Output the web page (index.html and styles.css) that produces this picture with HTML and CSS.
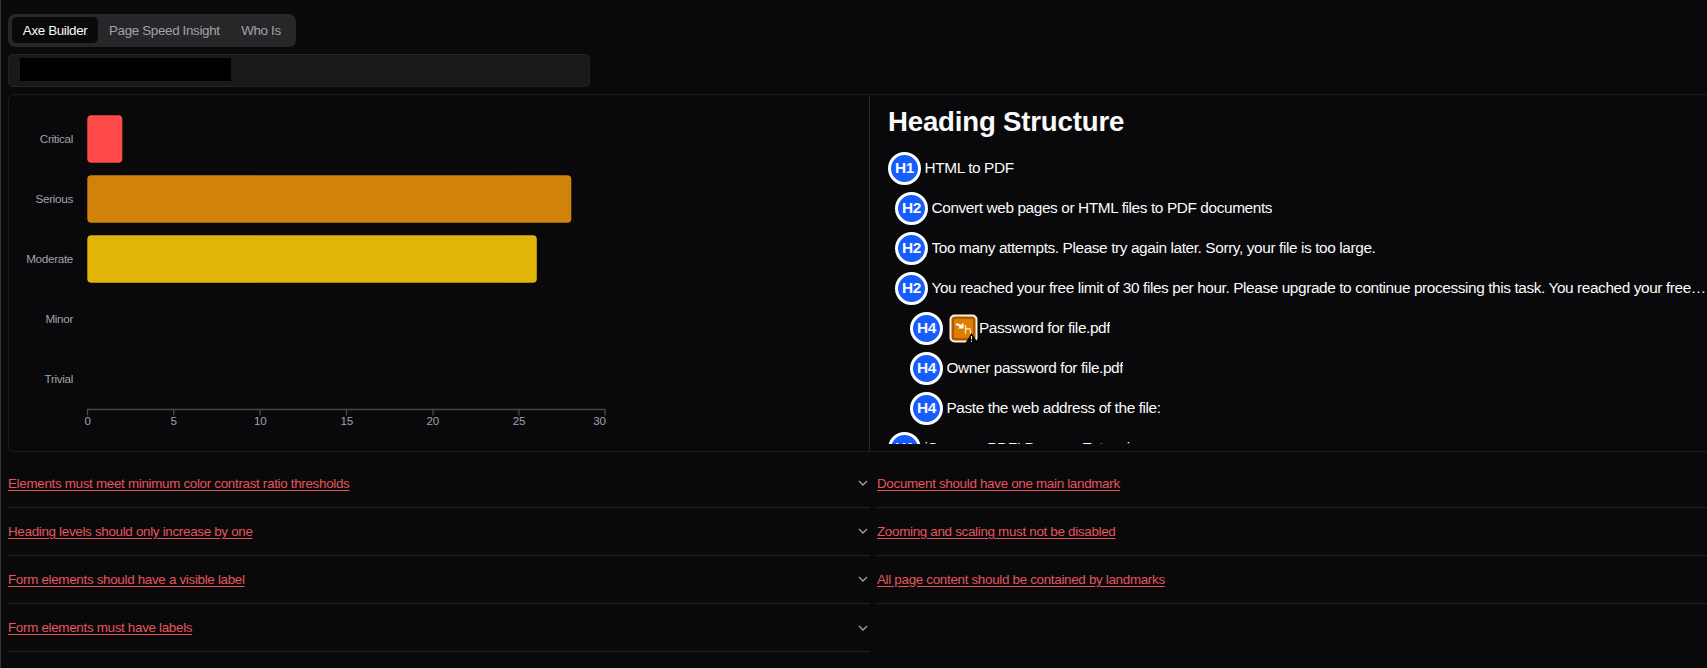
FILE: index.html
```html
<!DOCTYPE html>
<html lang="en">
<head>
<meta charset="utf-8">
<title>Axe Builder</title>
<link rel="stylesheet" href="styles.css">
</head>
<body>
<main class="app">
  <nav class="tabs">
    <button class="tab tab-active">Axe Builder</button>
    <button class="tab">Page Speed Insight</button>
    <button class="tab">Who Is</button>
  </nav>
  <div class="url-field"><span class="redacted"></span></div>
  <section class="panels">
    <div class="chart">
      <svg class="chart-svg" width="640" height="356" viewBox="0 0 640 356">
        <rect x="78.300" y="20.300" width="35" height="47.5" rx="4" fill="#ff4a49"/>
        <rect x="78.300" y="80.300" width="484" height="47.5" rx="4" fill="#d1820b"/>
        <rect x="78.300" y="140.300" width="449.500" height="47.5" rx="4" fill="#e0b508"/>
        <g class="label-y">
          <text x="64" y="48">Critical</text>
          <text x="64" y="108">Serious</text>
          <text x="64" y="168">Moderate</text>
          <text x="64" y="228">Minor</text>
          <text x="64" y="288">Trivial</text>
        </g>
        <path class="axis" d="M78 314.500H596.500M78.500 314.500v6M164.700 314.500v6M251 314.500v6M337.500 314.500v6M424 314.500v6M510 314.500v6M596 314.500v6"/>
        <g class="label-x">
          <text x="78.500" y="330">0</text>
          <text x="164.700" y="330">5</text>
          <text x="251.200" y="330">10</text>
          <text x="337.700" y="330">15</text>
          <text x="423.800" y="330">20</text>
          <text x="510" y="330">25</text>
          <text x="590.500" y="330">30</text>
        </g>
      </svg>
    </div>
    <div class="structure">
      <h1 class="structure-title">Heading Structure</h1>
      <ul class="tree">
        <li class="node"><span class="badge">H1</span><span class="node-text">HTML to PDF</span></li>
        <li class="node level-2"><span class="badge">H2</span><span class="node-text">Convert web pages or HTML files to PDF documents</span></li>
        <li class="node level-2"><span class="badge">H2</span><span class="node-text">Too many attempts. Please try again later. Sorry, your file is too large.</span></li>
        <li class="node level-2"><span class="badge">H2</span><span class="node-text node-text-long">You reached your free limit of 30 files per hour. Please upgrade to continue processing this task. You reached your free…</span></li>
        <li class="node level-4"><span class="badge">H4</span>
          <svg class="skip-icon" width="29" height="29" viewBox="0 0 29 29">
            <rect x="0.500" y="0.500" width="28" height="28" rx="5" fill="#fff0db"/>
            <rect x="2.500" y="2.500" width="24" height="24" rx="3.500" fill="#a95b05"/>
            <rect x="5" y="5" width="19" height="19" rx="1" fill="#e07d00"/>
            <path d="M7 10l5 2" stroke="#fff" stroke-width="2"/><path d="M14.500 8.500v6h-5.500z" fill="#fff"/>
            <path d="M16.500 11v9M16.500 16.500q0-2 2.500-2t2.500 2v3.500" fill="none" stroke="#ffe2b6" stroke-width="1.300"/>
            <path d="M16.500 29l6-10 6.500 10z" fill="#000"/><path d="M22.500 22v3.500M22.500 26.800v1.200" stroke="#fff" stroke-width="1.200"/>
          </svg><span class="node-text">Password for file.pdf</span></li>
        <li class="node level-4"><span class="badge">H4</span><span class="node-text">Owner password for file.pdf</span></li>
        <li class="node level-4"><span class="badge">H4</span><span class="node-text">Paste the web address of the file:</span></li>
        <li class="node"><span class="badge">H1</span><span class="node-text">iSummer PDF! Browser Extension</span></li>
      </ul>
    </div>
  </section>
  <section class="issues">
    <div class="issue-col">
      <div class="issue"><a class="issue-link">Elements must meet minimum color contrast ratio thresholds</a><svg class="chevron" viewBox="0 0 10 6"><path d="M1 1l4 4 4-4"/></svg></div>
      <div class="issue"><a class="issue-link">Heading levels should only increase by one</a><svg class="chevron" viewBox="0 0 10 6"><path d="M1 1l4 4 4-4"/></svg></div>
      <div class="issue"><a class="issue-link">Form elements should have a visible label</a><svg class="chevron" viewBox="0 0 10 6"><path d="M1 1l4 4 4-4"/></svg></div>
      <div class="issue"><a class="issue-link">Form elements must have labels</a><svg class="chevron" viewBox="0 0 10 6"><path d="M1 1l4 4 4-4"/></svg></div>
    </div>
    <div class="issue-col">
      <div class="issue"><a class="issue-link">Document should have one main landmark</a></div>
      <div class="issue"><a class="issue-link">Zooming and scaling must not be disabled</a></div>
      <div class="issue"><a class="issue-link">All page content should be contained by landmarks</a></div>
    </div>
  </section>
</main>
</body>
</html>
```
FILE: styles.css
```css
* { box-sizing: border-box; }
body {
  margin: 0;
  background: #09090b;
  color: #fafafa;
  font-family: "Liberation Sans", Arial, sans-serif;
  overflow: hidden;
}
.app {
  height: 668px;
  padding: 13.500px 0 0 7px;
  border-left: 1px solid #343437;
  overflow: hidden;
}
.tabs {
  display: flex;
  align-items: center;
  width: 288px;
  height: 33px;
  padding: 0 4px;
  border-radius: 7px;
  background: #27272a;
}
.tab {
  height: 26px;
  padding: 0 10.800px;
  border: 0;
  border-radius: 5px;
  background: none;
  color: #a1a1aa;
  font: 13.400px "Liberation Sans", Arial, sans-serif;
  letter-spacing: -0.350px;
  white-space: nowrap;
}
.tab-active { background: #09090b; color: #fafafa; }
.url-field {
  width: 582px;
  height: 33px;
  margin-top: 7px;
  padding: 3px 11px;
  border: 1px solid #242427;
  border-radius: 5px;
  background: #19191b;
}
.redacted { display: block; width: 211px; height: 23px; background: #000; }
.panels {
  display: grid;
  grid-template-columns: 861px 1fr;
  height: 358px;
  margin-top: 7px;
  border: 1px solid #1c1c1f;
  border-right: 0;
  border-radius: 6px 0 0 6px;
}
.chart { border-right: 1px solid #29292c; }
.chart-svg { display: block; }
.label-y { font-size: 11.700px; letter-spacing: -0.320px; fill: #a1a1aa; text-anchor: end; }
.label-x { font-size: 11.600px; letter-spacing: -0.200px; fill: #a1a1aa; text-anchor: middle; }
.axis { stroke: #48484b; stroke-width: 1.300; fill: none; }
.structure { height: 349px; padding-left: 18px; overflow: hidden; min-width: 0; }
.structure-title { margin: 8px 0 0; font-size: 27.600px; letter-spacing: -0.180px; line-height: 38px; }
.tree { margin: 8px 0 0; padding: 0; list-style: none; }
.node { display: flex; align-items: center; height: 40px; gap: 3.500px; font-size: 15.400px; letter-spacing: -0.395px; }
.level-2 { padding-left: 7px; }
.level-4 { padding-left: 22px; }
.badge {
  display: flex;
  flex: none;
  align-items: center;
  justify-content: center;
  width: 33px;
  height: 33px;
  border: 3px solid #fff;
  border-radius: 50%;
  background: #155dfc;
  font-weight: 700;
  line-height: 18px;
  padding-bottom: 1px;
}
.node-text { overflow: hidden; text-overflow: ellipsis; white-space: nowrap; min-width: 0; line-height: 20px; padding-bottom: 1px; }
.node-text-long { flex: none; letter-spacing: -0.405px; }
.skip-icon { flex: none; margin: 0 -2px 0 2px; }
.issues { display: grid; grid-template-columns: 862px 1fr; gap: 7px; margin-top: 8px; }
.issue {
  display: flex;
  align-items: center;
  justify-content: space-between;
  height: 48.200px;
  padding-right: 2.500px;
  border-bottom: 1px solid #242427;
}
.issue-link { font-size: 13.400px; letter-spacing: -0.310px; color: #e5555a; text-decoration: underline; text-underline-offset: 1.500px; }
.chevron { width: 10px; height: 6px; fill: none; stroke: #a1a1aa; stroke-width: 1.300; overflow: visible; }
```
